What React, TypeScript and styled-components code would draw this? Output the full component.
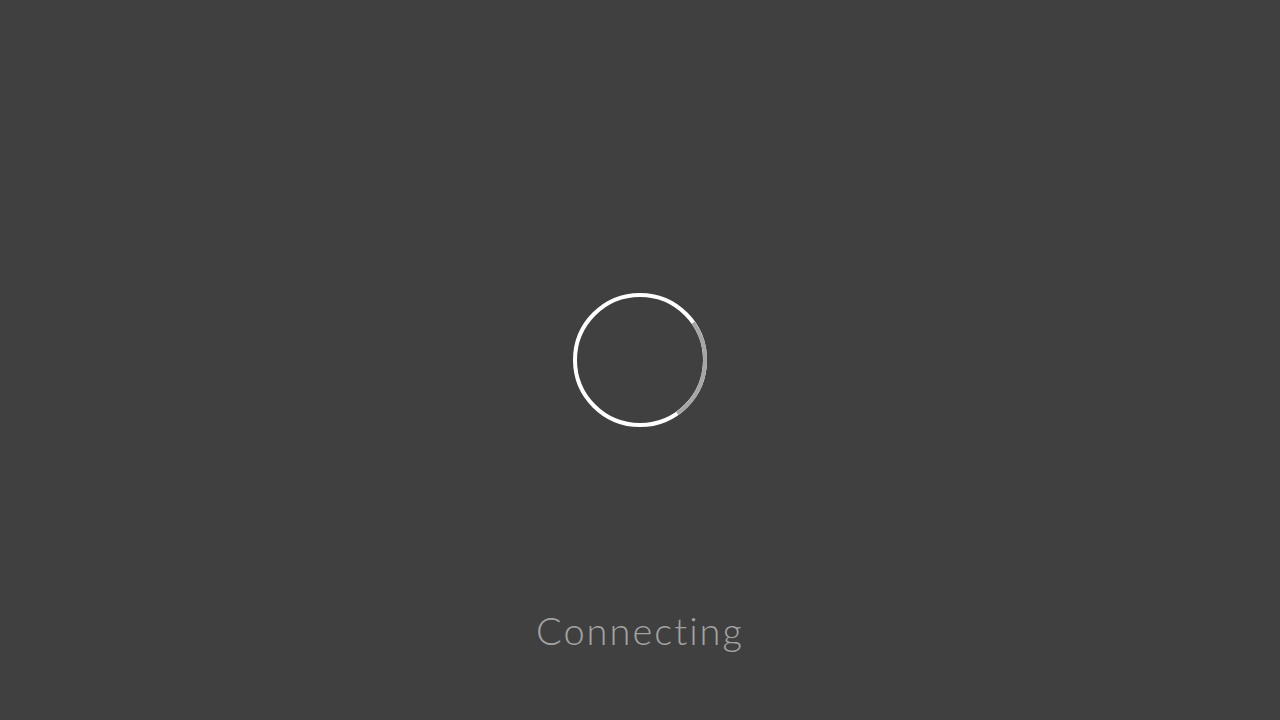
import React from 'react'
import { createGlobalStyle, styled } from 'styled-components'

const GlobalStyle = createGlobalStyle`
  html, body {
    margin: 0;
    padding: 0;
    background: #404040;
  }
`

const Screen = styled.div`
  display: grid;
  grid-template-rows: 1fr auto 1fr;
  justify-items: center;
  width: 100vw;
  height: 100vh;
  overflow: hidden;
  background: #404040;
`

const SpinnerBox = styled.div`
  grid-row: 2;
  width: 136px;
  height: 136px;
`

const Label = styled.div`
  grid-row: 3;
  padding-top: 178px;
  font-family: Lato, 'Noto Sans', sans-serif;
  font-weight: 300;
  font-size: 38px;
  line-height: 48px;
  letter-spacing: 2px;
  font-variant-ligatures: none;
  color: #a3a3a3;
`

const Spinner: React.FC = () => {
  const r = 65
  const c = 2 * Math.PI * r
  const arc = c / 4
  return (
    <svg width="136" height="136" viewBox="0 0 136 136">
      <circle cx="68" cy="68" r={r} fill="none" stroke="#ffffff" strokeWidth="4" />
      <circle
        cx="68"
        cy="68"
        r={r}
        fill="none"
        stroke="#a6a6a6"
        strokeWidth="4"
        strokeDasharray={`${arc} ${c - arc}`}
        transform="rotate(-35 68 68)"
      />
    </svg>
  )
}

const App: React.FC = () => (
  <Screen>
    <GlobalStyle />
    <SpinnerBox>
      <Spinner />
    </SpinnerBox>
    <Label>Connecting</Label>
  </Screen>
)

export default App
